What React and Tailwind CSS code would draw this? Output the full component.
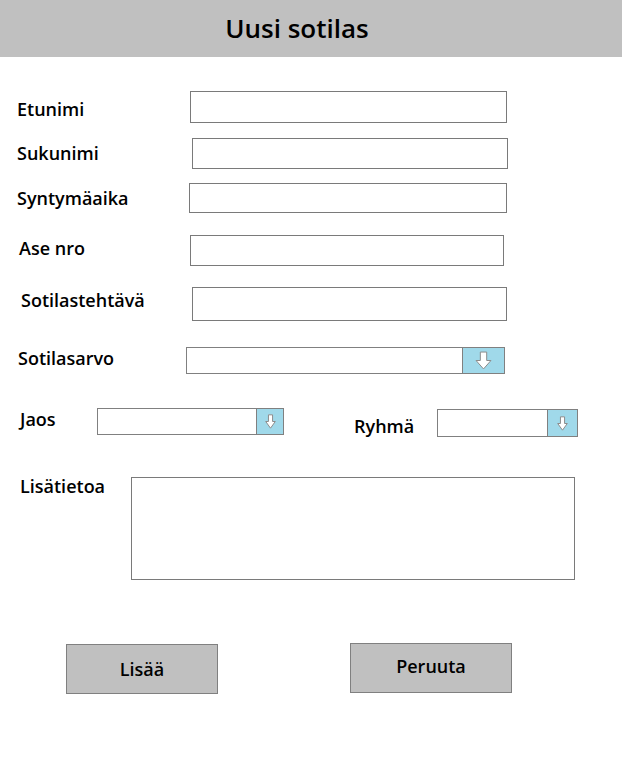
import React from "react";

const font = { fontFamily: '"Open Sans", "Noto Sans", sans-serif' };

const DownArrow = ({ w = 16, h = 18 }) => (
  <svg width={w} height={h} viewBox="0 0 16 18" preserveAspectRatio="none">
    <path
      d="M5 1 H11 V9 H15 L8 17 L1 9 H5 Z"
      fill="#ffffff"
      stroke="#8c8c8c"
      strokeWidth="1"
      vectorEffect="non-scaling-stroke"
    />
  </svg>
);

const Select = ({ className, btn, arrow }) => (
  <div className={`flex border border-[#808080] bg-white ${className}`}>
    <div className="flex-1" />
    <div
      className={`flex items-center justify-center border-l border-[#808080] bg-[#a0d9ea] ${btn}`}
    >
      <DownArrow w={arrow[0]} h={arrow[1]} />
    </div>
  </div>
);

const Label = ({ children, className }) => (
  <div className={`shrink-0 text-[18px] font-semibold leading-6 text-black ${className}`}>
    {children}
  </div>
);

const Box = ({ className }) => (
  <div className={`shrink-0 border border-[#7a7a7a] bg-white ${className}`} />
);

export default function App() {
  return (
    <div className="w-[622px] h-[764px] bg-white" style={font}>
      {/* header */}
      <div className="flex h-[57px] items-center justify-center bg-[#c0c0c0]">
        <h1 className="ml-[-28px] text-[26px] font-semibold text-black">Uusi sotilas</h1>
      </div>

      <div className="flex flex-col">
        {/* Etunimi */}
        <div className="mt-[34px] flex items-start">
          <Label className="mt-[6px] pl-[17px] w-[190px]">Etunimi</Label>
          <Box className="h-[32px] w-[317px]" />
        </div>

        {/* Sukunimi */}
        <div className="mt-[15px] flex items-start">
          <Label className="mt-[3px] pl-[17px] w-[192px]">Sukunimi</Label>
          <Box className="h-[31px] w-[316px]" />
        </div>

        {/* Syntymäaika */}
        <div className="mt-[14px] flex items-start">
          <Label className="mt-[3px] pl-[17px] w-[189px]">Syntymäaika</Label>
          <Box className="h-[30px] w-[318px]" />
        </div>

        {/* Ase nro */}
        <div className="mt-[22px] flex items-start">
          <Label className="mt-[1px] pl-[19px] w-[190px]">Ase nro</Label>
          <Box className="h-[31px] w-[314px]" />
        </div>

        {/* Sotilastehtävä */}
        <div className="mt-[21px] flex items-start">
          <Label className="mt-[1px] pl-[21px] w-[192px]">Sotilastehtävä</Label>
          <Box className="h-[34px] w-[315px]" />
        </div>

        {/* Sotilasarvo */}
        <div className="mt-[26px] flex items-start">
          <Label className="mt-[-1px] pl-[18px] w-[186px]">Sotilasarvo</Label>
          <Select className="h-[27px] w-[319px]" btn="w-[42px]" arrow={[17, 19]} />
        </div>

        {/* Jaos / Ryhmä */}
        <div className="mt-[34px] flex items-start">
          <Label className="mt-[-1px] pl-[20px] w-[97px]">Jaos</Label>
          <Select className="h-[27px] w-[187px]" btn="w-[27px]" arrow={[11, 15]} />
          <Label className="ml-[70px] mt-[6px] w-[83px]">Ryhmä</Label>
          <Select className="mt-[1px] h-[28px] w-[141px]" btn="w-[30px]" arrow={[11, 15]} />
        </div>

        {/* Lisätietoa */}
        <div className="mt-[39px] flex items-start">
          <Label className="mt-[-3px] pl-[20px] w-[131px]">Lisätietoa</Label>
          <Box className="h-[103px] w-[444px]" />
        </div>

        {/* buttons */}
        <div className="mt-[63px] flex items-start">
          <button className="ml-[66px] mt-[1px] flex h-[50px] w-[152px] items-center justify-center border border-[#808080] bg-[#c0c0c0] text-[18px] font-semibold text-black">
            Lisää
          </button>
          <button className="ml-[132px] flex h-[50px] w-[162px] items-center justify-center border border-[#808080] bg-[#c0c0c0] pb-[4px] text-[18px] font-semibold text-black">
            Peruuta
          </button>
        </div>
      </div>
    </div>
  );
}
